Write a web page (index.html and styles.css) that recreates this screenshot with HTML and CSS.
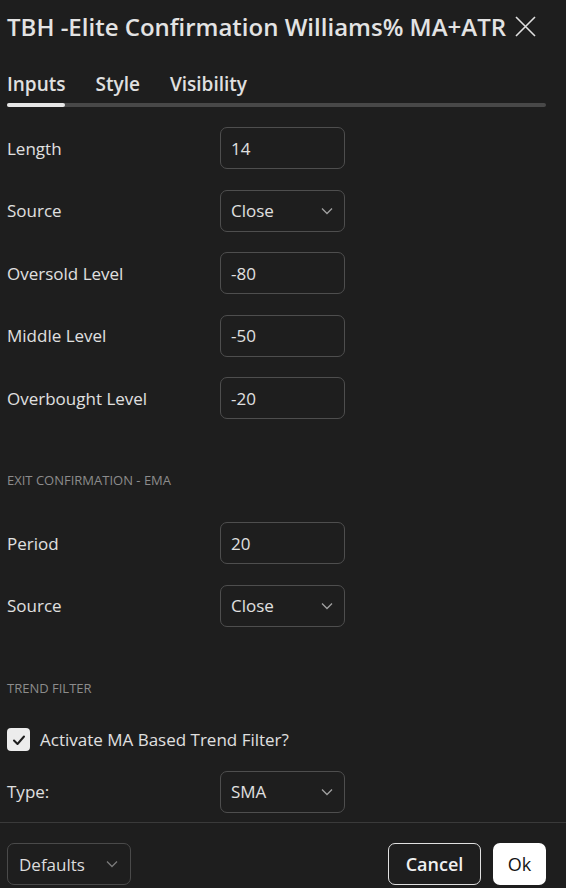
FILE: index.html
```html
<!DOCTYPE html>
<html>
<head>
<meta charset="utf-8">
<link rel="stylesheet" href="styles.css">
</head>
<body>
<div class="dialog">
  <div class="header">
    <div class="title">TBH -Elite Confirmation Williams% MA+ATR</div>
    <svg class="close" width="21" height="21" viewBox="0 0 21 21"><path d="M1 1L20 20M20 1L1 20" stroke="#e0e0e0" stroke-width="1.6" fill="none"/></svg>
  </div>
  <div class="tabs">
    <span class="tab active">Inputs</span>
    <span class="tab">Style</span>
    <span class="tab">Visibility</span>
  </div>
  <div class="tabbar"><div class="tabbar-fill"></div></div>
  <div class="content">
    <div class="row"><span class="label">Length</span><div class="field">14</div></div>
    <div class="row"><span class="label">Source</span><div class="field select">Close<svg class="chev" width="12" height="8" viewBox="0 0 12 8"><path d="M1 1.5L6 6.5L11 1.5" stroke="#a0a0a0" stroke-width="1.3" fill="none"/></svg></div></div>
    <div class="row"><span class="label">Oversold Level</span><div class="field">-80</div></div>
    <div class="row"><span class="label">Middle Level</span><div class="field">-50</div></div>
    <div class="row"><span class="label">Overbought Level</span><div class="field">-20</div></div>
    <div class="section">EXIT CONFIRMATION - EMA</div>
    <div class="row"><span class="label">Period</span><div class="field">20</div></div>
    <div class="row"><span class="label">Source</span><div class="field select">Close<svg class="chev" width="12" height="8" viewBox="0 0 12 8"><path d="M1 1.5L6 6.5L11 1.5" stroke="#a0a0a0" stroke-width="1.3" fill="none"/></svg></div></div>
    <div class="section section2">TREND FILTER</div>
    <div class="check-row">
      <span class="checkbox"><svg width="14" height="12" viewBox="0 0 14 12"><path d="M2 6.5L5.5 10L12 2.5" stroke="#1e1e1e" stroke-width="2" fill="none" stroke-linecap="round" stroke-linejoin="round"/></svg></span>
      <span class="label">Activate MA Based Trend Filter?</span>
    </div>
    <div class="row"><span class="label">Type:</span><div class="field select">SMA<svg class="chev" width="12" height="8" viewBox="0 0 12 8"><path d="M1 1.5L6 6.5L11 1.5" stroke="#a0a0a0" stroke-width="1.3" fill="none"/></svg></div></div>
  </div>
  <div class="footer">
    <div class="btn defaults">Defaults<svg class="chev" width="12" height="8" viewBox="0 0 12 8"><path d="M1 1.5L6 6.5L11 1.5" stroke="#7a7a7a" stroke-width="1.3" fill="none"/></svg></div>
    <div class="spacer"></div>
    <div class="btn cancel">Cancel</div>
    <div class="btn ok">Ok</div>
  </div>
</div>
</body>
</html>
```

FILE: styles.css
```css
html, body {
  margin: 0;
  padding: 0;
  background: #1e1e1e;
}
body {
  font-family: "Open Sans", "Noto Sans", sans-serif;
  color: #e0e0e0;
  width: 566px;
  height: 888px;
  overflow: hidden;
}
.dialog {
  display: flex;
  flex-direction: column;
  height: 888px;
}
.header {
  display: flex;
  align-items: center;
  padding: 13px 0 0 7px;
  height: 26px;
  flex: none;
}
.title {
  font-size: 24px;
  font-weight: 600;
  color: #e3e3e3;
  white-space: nowrap;
}
.close {
  margin-left: 9px;
}
.tabs {
  display: flex;
  gap: 30px;
  padding: 32px 0 0 7px;
  font-size: 19px;
  font-weight: 600;
  height: 26px;
  line-height: 26px;
  flex: none;
}
.tabbar {
  margin: 6px 20px 0 7px;
  height: 4px;
  border-radius: 2px;
  background: #484848;
  flex: none;
}
.tabbar-fill {
  width: 58px;
  height: 4px;
  border-radius: 2px;
  background: #e6e6e6;
}
.content {
  flex: 1;
  min-height: 0;
  overflow: hidden;
  padding: 20px 0 0 7px;
}
.row {
  display: flex;
  align-items: center;
  height: 42px;
  margin-bottom: 20.5px;
}
.label {
  font-size: 17px;
  font-weight: 500;
  color: #e0e0e0;
  width: 213px;
}
.field {
  box-sizing: border-box;
  width: 125px;
  height: 42px;
  border: 1px solid #4e4e4e;
  border-radius: 7px;
  padding-left: 10px;
  display: flex;
  align-items: center;
  font-size: 17px;
  font-weight: 500;
  color: #e0e0e0;
}
.select {
  justify-content: space-between;
  padding-right: 11px;
}
.section {
  font-size: 13px;
  color: #8c8c8c;
  height: 16px;
  line-height: 16px;
  margin: 53px 0 34px;
}
.section2 {
  margin-bottom: 32px;
}
.check-row {
  display: flex;
  align-items: center;
  height: 24px;
  margin-bottom: 19px;
}
.checkbox {
  width: 23px;
  height: 23px;
  border-radius: 4px;
  background: #ececec;
  display: flex;
  align-items: center;
  justify-content: center;
  margin-right: 10px;
}
.check-row .label {
  width: auto;
}
.footer {
  flex: none;
  border-top: 1px solid #3a3a3a;
  display: flex;
  align-items: center;
  padding: 20px 20px 3px 7px;
  height: 42px;
}
.spacer {
  flex: 1;
}
.btn {
  box-sizing: border-box;
  height: 42px;
  border-radius: 7px;
  display: flex;
  align-items: center;
  font-size: 17px;
  font-weight: 500;
}
.defaults {
  width: 124px;
  border: 1px solid #4a4a4a;
  padding: 0 12px 0 11px;
  justify-content: space-between;
  color: #dcdcdc;
}
.cancel {
  width: 93px;
  border: 1px solid #e0e0e0;
  justify-content: center;
  color: #f0f0f0;
  font-size: 18px;
  font-weight: 600;
  margin-right: 12px;
}
.ok {
  width: 53px;
  background: #ffffff;
  color: #131313;
  justify-content: center;
  font-size: 18px;
}
```
